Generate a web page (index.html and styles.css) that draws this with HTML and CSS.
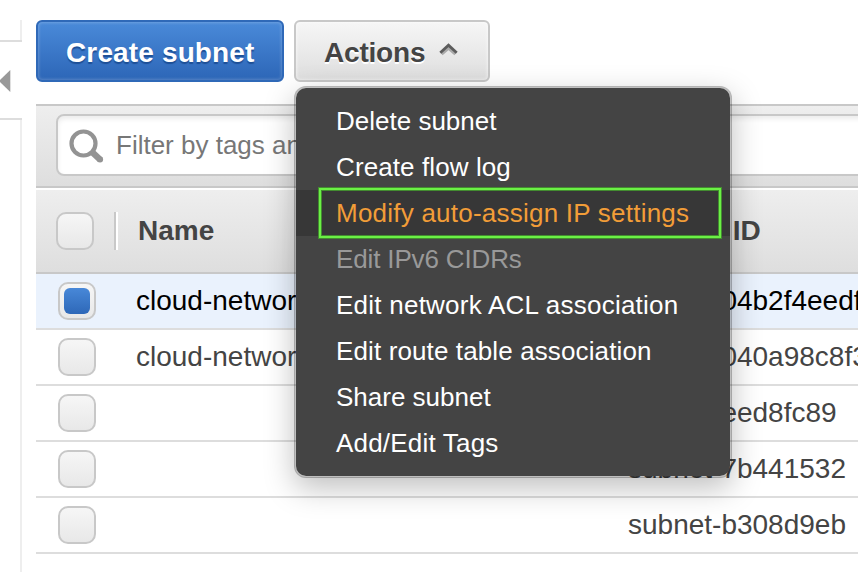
FILE: index.html
```html
<!DOCTYPE html>
<html lang="en">
<head>
<meta charset="utf-8">
<title>Subnets</title>
<link rel="stylesheet" href="styles.css">
</head>
<body>
<div class="app">
  <aside class="rail">
    <div class="rail-top"></div>
    <div class="rail-toggle">
      <svg width="11" height="24" viewBox="0 0 11 24"><path d="M10.3 1v22L-1 12z" fill="#999"/></svg>
    </div>
    <div class="rail-rest"></div>
  </aside>
  <main class="main">
    <div class="actions">
      <button class="btn primary"><span>Create subnet</span></button>
      <div class="dropdown">
        <button class="btn secondary"><span>Actions</span>
          <svg class="caret" width="20" height="14" viewBox="0 0 20 14" fill="none">
            <path d="M2.5 11L9.5 5L16.5 11" stroke="#aaa" stroke-width="3.4"/>
            <path d="M1.3 9.7L9.5 2.2L17.7 9.7" stroke="#5c5c5c" stroke-width="2.8"/>
          </svg>
        </button>
        <ul class="menu">
          <li>Delete subnet</li>
          <li class="flow">Create flow log</li>
          <li class="active">Modify auto-assign IP settings</li>
          <li class="disabled">Edit IPv6 CIDRs</li>
          <li class="acl">Edit network ACL association</li>
          <li class="route">Edit route table association</li>
          <li>Share subnet</li>
          <li class="tags">Add/Edit Tags</li>
        </ul>
      </div>
    </div>
    <div class="toolbar">
      <div class="search">
        <svg width="36" height="36" viewBox="0 0 36 36" fill="none" stroke="#939393"><circle cx="14.5" cy="14.5" r="12" stroke-width="4.2"/><path d="M22.5 22.5L31.5 31" stroke-width="6.5"/><path d="M31 30.5h.1" stroke-width="6" stroke-linecap="round"/></svg>
        <span>Filter by tags and attributes</span>
      </div>
    </div>
    <div class="grid">
      <div class="row head"><i class="check"></i><i class="divider"></i><span class="name">Name</span><span class="id">Subnet ID</span></div>
      <div class="row selected"><i class="check on"></i><span class="name">cloud-network</span><span class="id">subnet-04b2f4eedf</span></div>
      <div class="row"><i class="check"></i><span class="name">cloud-network</span><span class="id">subnet-040a98c8f3</span></div>
      <div class="row"><i class="check"></i><span class="name"></span><span class="id">subnet-eed8fc89</span></div>
      <div class="row"><i class="check"></i><span class="name"></span><span class="id">subnet-7b441532</span></div>
      <div class="row"><i class="check"></i><span class="name"></span><span class="id">subnet-b308d9eb</span></div>
    </div>
  </main>
</div>
</body>
</html>
```
FILE: styles.css
```css
* { box-sizing: border-box; }
body {
  margin: 0;
  background: #fff;
  color: #444;
  font-family: "Liberation Sans", Arial, sans-serif;
  font-size: 28px;
  overflow: hidden;
}
.app { display: flex; height: 572px; overflow: hidden; }
.rail { width: 22px; margin-right: 14px; padding-top: 20px; display: flex; flex-direction: column; flex: none; }
.rail-top { height: 20px; border-right: 2px solid #eee; }
.rail-toggle {
  height: 80px;
  border-top: 2px solid #ddd;
  border-bottom: 2px solid #ddd;
  display: flex;
  align-items: center;
}
.rail-toggle svg { margin-top: 2px; }
.rail-rest { flex: 1; border-right: 2px solid #eee; }
.main { flex: 1; min-width: 0; padding-top: 20px; }
.actions { display: flex; gap: 10px; height: 84px; }
.btn {
  height: 62px;
  padding: 0 0 0 28px;
  border-radius: 6px;
  font: bold 28px "Liberation Sans", Arial, sans-serif;
  display: flex;
  align-items: center;
  white-space: nowrap;
}
.btn span { margin-top: 3px; }
.primary {
  width: 248px;
  color: #fff;
  border: 2px solid #2f69b8;
  background: linear-gradient(#4a8ad9, #2d66b7);
  box-shadow: inset 0 0 3px 1px rgba(255, 255, 255, .2);
  text-shadow: 0 2px 1px #1d4f96;
  letter-spacing: .14px;
}
.secondary {
  width: 196px;
  color: #444;
  border: 2px solid #c8c8c8;
  background: linear-gradient(#f6f6f6, #dedede);
  box-shadow: inset 0 0 3px 1px rgba(255, 255, 255, .5);
  text-shadow: 0 2px 0 #fff;
  letter-spacing: -.2px;
}
.caret { margin: -2px 0 0 14px; }
.dropdown { position: relative; }
.menu {
  position: absolute;
  z-index: 2;
  top: 66px;
  left: 0;
  width: 438px;
  height: 392px;
  margin: 0;
  padding: 10px 0;
  list-style: none;
  background: #444;
  background-clip: padding-box;
  border: 2px solid rgba(0, 0, 0, .25);
  border-radius: 12px;
  box-shadow: 0 10px 30px rgba(0, 0, 0, .25);
  color: #fff;
  font-size: 26px;
}
.menu li { height: 46px; line-height: 46px; padding-left: 40px; white-space: nowrap; }
.flow { letter-spacing: .1px; }
.acl { letter-spacing: .24px; }
.route { letter-spacing: .12px; }
.tags { letter-spacing: .2px; }
.menu .disabled { color: #999; letter-spacing: -.14px; }
.menu .active { position: relative; background: #373737; color: #f29d38; letter-spacing: .23px; }
.active::after {
  content: "";
  position: absolute;
  inset: -2px 9px -2px 23px;
  border: 2px solid #6bf045;
  box-shadow: 0 0 0 1px #438c30, inset 0 0 0 1px #438c30;
}
.toolbar {
  height: 84px;
  padding: 8px 0 0 20px;
  border-top: 2px solid #c8c8c8;
  border-bottom: 2px solid #c8c8c8;
  background: linear-gradient(#eee, #dedede);
}
.search {
  height: 62px;
  margin-right: -20px;
  padding-left: 11px;
  display: flex;
  align-items: center;
  gap: 11px;
  border: 2px solid #c8c8c8;
  border-radius: 8px;
  background: #fff;
  box-shadow: inset 0 3px 5px rgba(0, 0, 0, .08);
  font-size: 26px;
  color: #777;
}
.search svg { margin-top: 3px; }
.row {
  height: 56px;
  display: flex;
  align-items: center;
  padding-left: 22px;
  border-bottom: 2px solid #ddd;
  white-space: nowrap;
}
.selected { background: #eaf2fd; color: #000; }
.head {
  height: 86px;
  padding-left: 20px;
  border-top: 2px solid #fff;
  border-bottom-color: #c8c8c8;
  background: linear-gradient(#eee, #dedede);
  background-clip: padding-box;
  font-weight: bold;
}
.check {
  flex: none;
  width: 38px;
  height: 38px;
  border: 2px solid #c8c8c8;
  border-radius: 10px;
  background: linear-gradient(#f6f6f6, #e8e8e8);
  display: grid;
  place-items: center;
}
.on::after { content: ""; width: 26px; height: 26px; border-radius: 6px; background: linear-gradient(#4888d8, #2e68b8); }
.divider { width: 4px; height: 38px; margin-left: 20px; background: linear-gradient(90deg, #c8c8c8 50%, #fff 50%); }
.name { width: 492px; margin-left: 40px; flex: none; }
.head .name { margin-left: 20px; }
.id { flex: none; }
```
